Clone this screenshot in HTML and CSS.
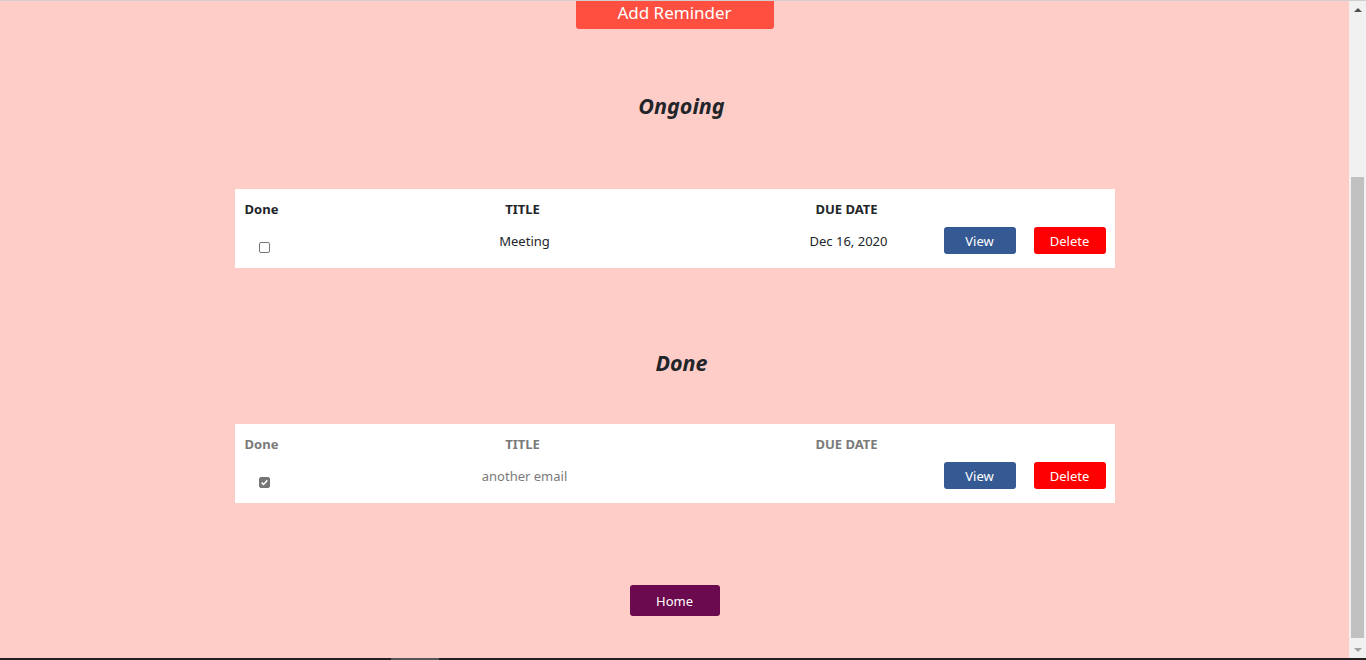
FILE: index.html
```html
<!DOCTYPE html>
<html lang="en">
<head>
<meta charset="utf-8">
<title>Reminders</title>
<link rel="stylesheet" href="styles.css">
</head>
<body>
<div class="topline"></div>
<div class="frame">
  <main class="page">
    <button class="btn-add">Add Reminder</button>
    <h2 class="section-title ongoing-title">Ongoing</h2>
    <section class="table">
      <div class="row head">
        <div class="cell c-done">Done</div>
        <div class="cell c-title">TITLE</div>
        <div class="cell c-date">DUE DATE</div>
        <div class="cell"></div>
        <div class="cell"></div>
      </div>
      <div class="row body">
        <div class="cell c-done"><span class="check"></span></div>
        <div class="cell c-title t-val">Meeting</div>
        <div class="cell c-date t-date">Dec 16, 2020</div>
        <div class="cell c-btn"><button class="btn btn-view">View</button></div>
        <div class="cell c-btn"><button class="btn btn-del">Delete</button></div>
      </div>
    </section>
    <h2 class="section-title done-title">Done</h2>
    <section class="table faded">
      <div class="row head">
        <div class="cell c-done">Done</div>
        <div class="cell c-title">TITLE</div>
        <div class="cell c-date">DUE DATE</div>
        <div class="cell"></div>
        <div class="cell"></div>
      </div>
      <div class="row body">
        <div class="cell c-done"><span class="check checked"><svg viewBox="0 0 11 11" width="9" height="9"><path d="M2 5.6 L4.3 7.9 L9 2.9" fill="none" stroke="#fff" stroke-width="1.9"/></svg></span></div>
        <div class="cell c-title t-val">another email</div>
        <div class="cell c-date t-date"></div>
        <div class="cell c-btn"><button class="btn btn-view">View</button></div>
        <div class="cell c-btn"><button class="btn btn-del">Delete</button></div>
      </div>
    </section>
    <button class="btn-home">Home</button>
  </main>
  <aside class="scrollbar">
    <div class="arrow up"></div>
    <div class="track"><div class="thumb"></div></div>
    <div class="arrow down"></div>
  </aside>
</div>
<div class="bottombar"><div class="bottom-seg"></div></div>
</body>
</html>
```

FILE: styles.css
```css
html, body {
  margin: 0;
  padding: 0;
}
body {
  width: 1366px;
  height: 660px;
  overflow: hidden;
  display: flex;
  flex-direction: column;
  background: #ffcdc8;
  font-family: "Noto Sans", "Open Sans", sans-serif;
  color: #212529;
}
.topline {
  height: 1px;
  background: #cfcfcf;
  flex: none;
}
.frame {
  flex: 1;
  display: flex;
  min-height: 0;
}
.page {
  flex: 1;
  display: flex;
  flex-direction: column;
  align-items: center;
}
.btn-add {
  width: 198px;
  height: 28px;
  border: none;
  border-radius: 0 0 3px 3px;
  background: #fe4f41;
  color: #fff;
  font-family: inherit;
  font-size: 17px;
  line-height: 22px;
  padding: 0 0 4px;
}
.section-title {
  margin: 0;
  padding-left: 14px;
  font-size: 21.5px;
  line-height: 30px;
  font-weight: 700;
  font-style: italic;
  color: #212529;
}
.ongoing-title {
  margin-top: 62px;
}
.done-title {
  margin-top: 80px;
}
.table {
  width: 880px;
  background: #fff;
  margin-top: 68px;
}
.done-title + .table {
  margin-top: 46px;
}
.row {
  display: grid;
  grid-template-columns: 54px 468px 180px 88px 90px;
  align-items: center;
}
.row.head {
  padding: 10px 0 6px;
  font-weight: 700;
  font-size: 13px;
  line-height: 20px;
}
.row.body {
  padding: 2px 0 14px;
  font-size: 13px;
  line-height: 20px;
}
.cell {
  text-align: center;
}
.c-btn {
  display: flex;
  justify-content: flex-start;
  padding-left: 7px;
}
.c-btn:last-child {
  padding-left: 9px;
}
.t-date {
  padding-left: 4px;
}
.t-val {
  padding-left: 4px;
}
.check {
  display: inline-block;
  box-sizing: border-box;
  width: 11px;
  height: 11px;
  border: 1px solid #767676;
  border-radius: 2px;
  background: #fff;
  margin-top: 13px;
  margin-left: 6px;
  vertical-align: top;
}
.check.checked {
  background: #767676;
}
.check svg {
  display: block;
  margin: 0 auto;
}
.btn {
  width: 72px;
  height: 27px;
  border: none;
  border-radius: 3px;
  color: #fff;
  font-family: inherit;
  font-size: 13px;
  padding: 0;
}
.btn-view {
  background: #355993;
}
.btn-del {
  background: #ff0000;
}
.faded .row.head,
.faded .t-val,
.faded .t-date {
  color: #7a7a7a;
}
.btn-home {
  margin-top: 82px;
  width: 90px;
  height: 31px;
  border: none;
  border-radius: 3px;
  background: #6b0a4e;
  color: #fff;
  font-family: inherit;
  font-size: 13px;
  padding: 0;
}
.scrollbar {
  width: 17px;
  flex: none;
  background: #f1f1f1;
  display: flex;
  flex-direction: column;
}
.arrow {
  height: 17px;
  flex: none;
  display: flex;
  justify-content: center;
  align-items: center;
}
.arrow::before {
  content: "";
  width: 0;
  height: 0;
  border-left: 4px solid transparent;
  border-right: 4px solid transparent;
}
.arrow.up::before {
  border-bottom: 4px solid #505050;
}
.arrow.down::before {
  border-top: 4px solid #a3a3a3;
}
.track {
  flex: 1;
  display: flex;
  flex-direction: column;
  justify-content: flex-end;
  padding: 0 2px 3px;
}
.thumb {
  height: 461px;
  background: #c1c1c1;
}
.bottombar {
  height: 2px;
  flex: none;
  background: #231f20;
  display: flex;
  padding-left: 391px;
}
.bottom-seg {
  width: 48px;
  background: #555;
}
```
